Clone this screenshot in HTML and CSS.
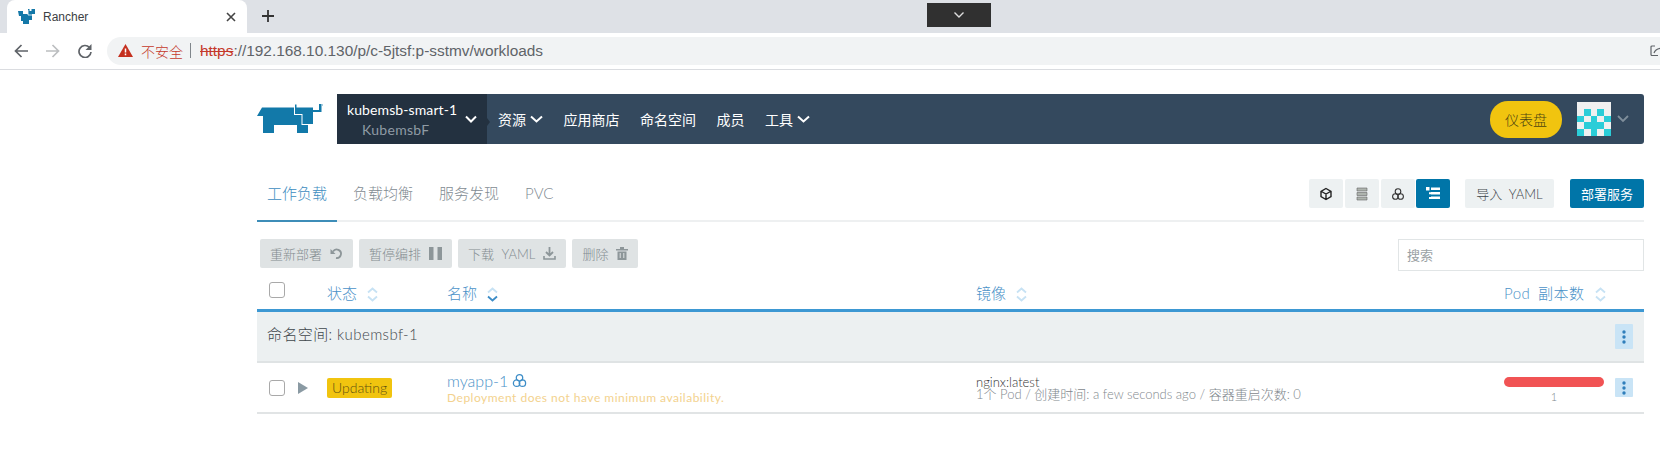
FILE: index.html
```html
<!DOCTYPE html>
<html lang="en">
<head>
    <meta charset="UTF-8">
    <title>Rancher</title>
    <link rel="stylesheet" href="styles.css">
</head>
<body>
    <!-- browser chrome -->
    <div class="tabstrip">
        <div class="tab">
            <svg class="tab-logo" width="17" height="16" viewBox="0 0 17 16"><path fill="#1478a8" d="M0 2h5v3h5V0h1.500v2h2V0H15l2 0v5h-3v6h-3v4H5v-3H3V7H1z"/><path d="M10 1v5h4" fill="none" stroke="#fff" stroke-width=".8"/></svg>
            <span class="tab-title">Rancher</span>
            <svg class="tab-close" width="10" height="10" viewBox="0 0 10 10"><path d="M1 1l8 8M9 1l-8 8" stroke="#444" stroke-width="1.600"/></svg>
        </div>
        <svg class="tab-new" width="12" height="12" viewBox="0 0 12 12"><path d="M6 0v12M0 6h12" stroke="#333" stroke-width="1.800"/></svg>
        <div class="fullscreen-tag">
            <svg width="10" height="6" viewBox="0 0 10 6"><path d="M.5.5L5 5 9.500.5" fill="none" stroke="#ddd" stroke-width="1.400"/></svg>
        </div>
    </div>
    <div class="toolbar">
        <svg class="nav-icon" width="14" height="14" viewBox="0 0 14 14"><path d="M14 7H2M7.500 1L1.500 7l6 6" fill="none" stroke="#5f6368" stroke-width="1.700"/></svg>
        <svg class="nav-icon" width="14" height="14" viewBox="0 0 14 14"><path d="M0 7h12M6.500 1l6 6-6 6" fill="none" stroke="#bcbec0" stroke-width="1.700"/></svg>
        <svg class="nav-icon" width="14" height="14" viewBox="0 0 14 14"><path d="M11.500 3.500A6 6 0 1 0 13 8" fill="none" stroke="#5f6368" stroke-width="1.700"/><path d="M13.500 0v6h-6z" fill="#5f6368"/></svg>
        <div class="omnibox">
            <svg width="15" height="13" viewBox="0 0 15 13"><path d="M7.500 0L15 13H0z" fill="#c5301f"/><path d="M7.500 4.500v4M7.500 9.600v1.600" stroke="#fff" stroke-width="1.500"/></svg>
            <span class="not-secure">不安全</span>
            <span class="omni-sep"></span>
            <span class="url"><span class="url-scheme">https</span>://192.168.10.130/p/c-5jtsf:p-sstmv/workloads</span>
            <svg class="share-icon" width="15" height="13" viewBox="0 0 15 13"><path d="M8 11.500H2a1 1 0 0 1-1-1V3a1 1 0 0 1 1-1h3M4 9c1-3 3-5 10-5" fill="none" stroke="#5f6368" stroke-width="1.200"/></svg>
        </div>
    </div>

    <div class="page">
        <!-- rancher header -->
        <header class="app-header">
            <div class="logo">
                <svg width="66" height="30" viewBox="17 14 66 30">
                    <path fill="#1279a9" d="M17 26l5-8.500h32V25h7.500v10H68v8H57v-8H34v8H23V26z"/>
                    <path fill="#1279a9" d="M55 14.500h1.500v3H73V34H62.500V24H55z"/>
                    <path fill="#1279a9" d="M79 14h2.500v8H73v-2h6z"/>
                    <circle cx="83" cy="15" r="1" fill="#8fbdd4"/>
                </svg>
            </div>
            <nav class="topbar">
                <div class="cluster">
                    <div class="cluster-text">
                        <div class="cluster-name">kubemsb-smart-1</div>
                        <div class="cluster-project">KubemsbF</div>
                    </div>
                    <svg class="chev" width="12" height="8" viewBox="0 0 12 8"><path d="M1 1.500l5 5 5-5" fill="none" stroke="#fff" stroke-width="2"/></svg>
                </div>
                <a class="nav-item">资源 <svg width="13" height="8" viewBox="0 0 13 8"><path d="M1 1.500l5.500 5 5.500-5" fill="none" stroke="#fff" stroke-width="2"/></svg></a>
                <a class="nav-item">应用商店</a>
                <a class="nav-item">命名空间</a>
                <a class="nav-item">成员</a>
                <a class="nav-item">工具 <svg width="13" height="8" viewBox="0 0 13 8"><path d="M1 1.500l5.500 5 5.500-5" fill="none" stroke="#fff" stroke-width="2"/></svg></a>
                <div class="topbar-right">
                    <a class="dashboard-btn">仪表盘</a>
                    <svg class="avatar" width="34" height="34" viewBox="0 0 5 5" shape-rendering="crispEdges">
                        <rect width="5" height="5" fill="#f0f0f0"/>
                        <path fill="#2bcdd8" d="M1 1h1v1H1zM3 1h1v1H3zM0 2h1v1H0zM2 2h1v1H2zM4 2h1v1H4zM1 3h3v1H1zM0 4h1v1H0zM2 4h1v1H2zM4 4h1v1H4z"/>
                    </svg>
                    <svg class="avatar-chev" width="12" height="8" viewBox="0 0 12 8"><path d="M1 1l5 5 5-5" fill="none" stroke="#7f8e9b" stroke-width="1.800"/></svg>
                </div>
            </nav>
        </header>

        <!-- tabs row -->
        <div class="tabs-row">
            <ul class="tabs">
                <li class="tab-link active">工作负载</li>
                <li class="tab-link">负载均衡</li>
                <li class="tab-link">服务发现</li>
                <li class="tab-link">PVC</li>
            </ul>
            <div class="tabs-actions">
                <div class="group-by">
                    <button class="btn-icon"><svg width="14" height="14" viewBox="0 0 14 14"><path d="M7 1.500l5 2.800v5.400l-5 2.800-5-2.800V4.300zM2.500 4.500L7 7l4.500-2.500M7 7v5" fill="none" stroke="#222" stroke-width="1.400"/></svg></button>
                    <button class="btn-icon"><svg width="14" height="14" viewBox="0 0 14 14"><path d="M2 1h10v3H2zM2 5.500h10v3H2zM2 10h10v3H2z" fill="#aeb4ae" stroke="#666" stroke-width=".6"/></svg></button>
                    <button class="btn-icon"><svg width="14" height="14" viewBox="0 0 14 14" fill="none" stroke="#333" stroke-width="1.100"><circle cx="7" cy="4.500" r="2.800"/><circle cx="4.400" cy="9.500" r="2.800"/><circle cx="9.600" cy="9.500" r="2.800"/></svg></button>
                    <button class="btn-icon selected"><svg width="14" height="13" viewBox="0 0 14 13" fill="#fff"><path d="M0 0h3.500v3.500H0zM5 .5h9v2.500H5zM3 5.300h2v2H3zM5 5h9v2.500H5zM3 10h2v2H3zM5 9.500h9V12H5z"/></svg></button>
                </div>
                <button class="btn-import">导入 YAML</button>
                <button class="btn-deploy">部署服务</button>
            </div>
        </div>

        <!-- bulk actions -->
        <div class="bulk-row">
            <div class="bulk-actions">
                <button class="btn-bulk">重新部署 <svg width="13" height="13" viewBox="0 0 13 13"><path d="M3 4.500A4.300 4.300 0 1 1 6 11" fill="none" stroke="#8d9699" stroke-width="1.800"/><path d="M.5 2v5h5z" fill="#8d9699"/></svg></button>
                <button class="btn-bulk">暂停编排 <svg width="13" height="13" viewBox="0 0 13 13"><path d="M0 0h4.500v13H0zM8.500 0H13v13H8.500z" fill="#8d9699"/></svg></button>
                <button class="btn-bulk">下载 YAML <svg width="13" height="13" viewBox="0 0 13 13"><path d="M6.500 0v8M3 5l3.500 3.500L10 5" fill="none" stroke="#8d9699" stroke-width="1.800"/><path d="M1 9v3h11V9" fill="none" stroke="#8d9699" stroke-width="1.600"/></svg></button>
                <button class="btn-bulk">删除 <svg width="12" height="13" viewBox="0 0 12 13"><path d="M0 2h12v1.500H0zM4 0h4v2H4zM1.500 4.500h9V13h-9z" fill="#8d9699"/><path d="M4.200 6v5M7.800 6v5" stroke="#dfe3e4"/></svg></button>
            </div>
            <input class="search" placeholder="搜索">
        </div>

        <!-- table -->
        <div class="table">
            <div class="row head">
                <div class="col-check"><span class="checkbox"></span></div>
                <div class="col-state">状态 <svg class="sort" width="11" height="15" viewBox="0 0 11 15"><path d="M1 5.500l4.500-4 4.500 4M1 9.500l4.500 4 4.500-4" fill="none" stroke="#c7e2f4" stroke-width="1.800"/></svg></div>
                <div class="col-name">名称 <svg class="sort" width="11" height="15" viewBox="0 0 11 15"><path d="M1 5.500l4.500-4 4.500 4" fill="none" stroke="#c7e2f4" stroke-width="1.800"/><path d="M1 9.500l4.500 4 4.500-4" fill="none" stroke="#3d8dc7" stroke-width="1.800"/></svg></div>
                <div class="col-image">镜像 <svg class="sort" width="11" height="15" viewBox="0 0 11 15"><path d="M1 5.500l4.500-4 4.500 4M1 9.500l4.500 4 4.500-4" fill="none" stroke="#c7e2f4" stroke-width="1.800"/></svg></div>
                <div class="col-pods">Pod 副本数 <svg class="sort" width="11" height="15" viewBox="0 0 11 15"><path d="M1 5.500l4.500-4 4.500 4M1 9.500l4.500 4 4.500-4" fill="none" stroke="#c7e2f4" stroke-width="1.800"/></svg></div>
            </div>
            <div class="group-row">
                <span class="group-name">命名空间: kubemsbf-1</span>
                <button class="btn-more tall"><svg width="4" height="14" viewBox="0 0 4 14" fill="#2f7fbb"><circle cx="2" cy="2" r="1.700"/><circle cx="2" cy="7" r="1.700"/><circle cx="2" cy="12" r="1.700"/></svg></button>
            </div>
            <div class="row item">
                <div class="col-check">
                    <span class="checkbox"></span>
                    <svg class="expand" width="10" height="12" viewBox="0 0 10 12"><path d="M0 0l10 6-10 6z" fill="#8a9aa3"/></svg>
                </div>
                <div class="col-state"><span class="badge">Updating</span></div>
                <div class="col-name">
                    <div class="app-name">myapp-1 <svg width="15" height="15" viewBox="0 0 14 14" fill="none" stroke="#3d8dc7" stroke-width="1.200"><circle cx="7" cy="4.500" r="3"/><circle cx="4.300" cy="9.500" r="3"/><circle cx="9.700" cy="9.500" r="3"/></svg></div>
                    <div class="app-warn">Deployment does not have minimum availability.</div>
                </div>
                <div class="col-image">
                    <div class="image-name">nginx:latest</div>
                    <div class="image-meta">1个 Pod / 创建时间: a few seconds ago / 容器重启次数: 0</div>
                </div>
                <div class="col-pods">
                    <div class="pod-bar"></div>
                    <div class="pod-count">1</div>
                </div>
                <button class="btn-more"><svg width="4" height="14" viewBox="0 0 4 14" fill="#2f7fbb"><circle cx="2" cy="2" r="1.700"/><circle cx="2" cy="7" r="1.700"/><circle cx="2" cy="12" r="1.700"/></svg></button>
            </div>
        </div>
    </div>
</body>
</html>
```
FILE: styles.css
```css
* {
    box-sizing: border-box;
}

body {
    margin: 0;
    width: 1660px;
    height: 476px;
    overflow: hidden;
    background-color: #fff;
    font-family: Lato, "Noto Sans CJK SC", sans-serif;
    font-weight: 300;
    color: #333;
}

button {
    font-family: inherit;
    font-weight: inherit;
    border: 0;
}

/* browser chrome */
.tabstrip {
    display: flex;
    align-items: flex-start;
    height: 33px;
    padding-left: 7px;
    background-color: #dee1e6;
}

.tab {
    display: flex;
    align-items: center;
    flex: none;
    width: 240px;
    height: 33px;
    padding-left: 11px;
    background-color: #fff;
    border-radius: 8px 8px 0 0;
}

.tab-title {
    margin-left: 8px;
    font-family: "Liberation Sans", sans-serif;
    font-weight: 400;
    font-size: 12px;
    color: #3c4043;
}

.tab-close {
    margin-left: auto;
    margin-right: 11px;
}

.tab-new {
    flex: none;
    margin: 10px 0 0 15px;
}

.fullscreen-tag {
    display: flex;
    align-items: center;
    justify-content: center;
    flex: none;
    width: 64px;
    height: 24px;
    margin: 3px 0 0 653px;
    background-color: #303030;
}

.toolbar {
    display: flex;
    align-items: center;
    height: 37px;
    padding: 0 0 1px 14px;
    border-bottom: 1px solid #dadce0;
}

.nav-icon {
    margin-right: 18px;
}

.nav-icon + .nav-icon + .nav-icon {
    margin-right: 15px;
}

.omnibox {
    display: flex;
    align-items: center;
    flex: 1;
    height: 28px;
    padding-left: 11px;
    background-color: #f1f3f4;
    border-radius: 14px 0 0 14px;
}

.not-secure {
    margin-left: 8px;
    font-size: 14px;
    color: #c5392b;
}

.omni-sep {
    width: 1px;
    height: 15px;
    margin: 0 9px 0 7px;
    background-color: #80868b;
}

.url {
    font-family: "Liberation Sans", sans-serif;
    font-weight: 400;
    font-size: 15.400px;
    color: #5f6368;
}

.url-scheme {
    color: #c5392b;
    text-decoration: line-through;
}

.share-icon {
    margin-left: auto;
    margin-right: -5px;
}

.page {
    padding-left: 257px;
    padding-right: 16px;
}

/* rancher header */
.app-header {
    display: flex;
    height: 50px;
    margin-top: 24px;
}

.logo {
    display: flex;
    align-items: center;
    width: 80px;
}

.topbar {
    display: flex;
    align-items: center;
    flex: 1;
    background-color: #34495e;
    border-radius: 0 3px 3px 0;
}

.cluster {
    position: relative;
    display: flex;
    align-items: center;
    width: 150px;
    height: 50px;
    padding-left: 10px;
    background-color: #233140;
}

.cluster::after {
    content: "";
    position: absolute;
    left: 100%;
    top: 24px;
    border-left: 3px solid #233140;
    border-top: 4px solid transparent;
    border-bottom: 4px solid transparent;
}

.cluster-text {
    flex: 1;
}

.cluster-name {
    font-size: 14px;
    font-weight: 400;
    letter-spacing: .1px;
    color: #fff;
}

.cluster-project {
    margin: 3px 0 0 15px;
    font-size: 14px;
    font-weight: 400;
    letter-spacing: .3px;
    color: #8f9ba5;
}

.cluster .chev {
    margin-right: 10px;
}

.nav-item {
    display: flex;
    align-items: center;
    gap: 4px;
    margin-left: 11px;
    margin-right: 9.500px;
    font-size: 14px;
    font-weight: 400;
    color: #fff;
}

.topbar-right {
    display: flex;
    align-items: center;
    margin-left: auto;
}

.dashboard-btn {
    display: flex;
    align-items: center;
    justify-content: center;
    width: 72px;
    height: 37px;
    border-radius: 18px;
    background-color: #f1c40f;
    font-size: 14px;
    color: #4d4410;
}

.avatar {
    margin-left: 15px;
}

.avatar-chev {
    margin: 0 15px 0 6px;
}

/* tabs row */
.tabs-row {
    display: flex;
    justify-content: space-between;
    height: 78px;
    border-bottom: 2px solid #eef0f1;
}

.tabs {
    display: flex;
    gap: 26px;
    margin: 0;
    padding: 0;
    list-style: none;
}

.tab-link {
    padding-top: 39px;
    line-height: 20px;
    font-size: 15px;
    color: #7f8b92;
}

.tab-link.active {
    margin: 0 -10px -2px 0;
    padding-left: 10px;
    padding-right: 10px;
    border-bottom: 2px solid #3d8db8;
    color: #3d8dc0;
}

.tabs-actions {
    display: flex;
    align-items: flex-start;
    padding-top: 35px;
}

.group-by {
    display: flex;
    gap: 2px;
    margin-right: 15px;
}

.btn-icon {
    display: flex;
    align-items: center;
    justify-content: center;
    width: 34px;
    height: 29px;
    padding: 0;
    background-color: #edf1f2;
    border-radius: 2px;
}

.btn-icon.selected {
    margin-left: -1px;
    background-color: #0075a8;
}

.btn-import {
    width: 89px;
    height: 29px;
    margin-right: 16px;
    padding: 0;
    background-color: #edf1f2;
    border-radius: 2px;
    font-size: 13px;
    word-spacing: 3px;
    color: #3f474c;
}

.btn-deploy {
    width: 74px;
    height: 29px;
    padding: 0;
    background-color: #0075a8;
    border-radius: 2px;
    font-size: 13px;
    font-weight: 400;
    color: #fff;
}

/* bulk actions */
.bulk-row {
    display: flex;
    justify-content: space-between;
    align-items: flex-start;
    margin-top: 17px;
    padding-left: 3px;
}

.bulk-actions {
    display: flex;
    gap: 6px;
}

.btn-bulk {
    display: flex;
    align-items: center;
    justify-content: center;
    gap: 8px;
    height: 29px;
    padding: 0 10px;
    background-color: #dfe3e4;
    border-radius: 2px;
    font-size: 13px;
    word-spacing: 4px;
    color: #838c90;
}

.search {
    width: 246px;
    height: 32px;
    padding: 0 8px;
    border: 1px solid #e1e5e6;
    font-size: 13px;
    font-family: inherit;
    outline: none;
}

.search::placeholder {
    color: #9aa1a4;
}

/* table */
.row {
    display: flex;
    align-items: center;
}

.row.head {
    height: 41px;
    padding-top: 4px;
    border-bottom: 3px solid #3d98d3;
    font-size: 15px;
    word-spacing: 3px;
    color: #4b92c8;
}

.head .col-check {
    padding-bottom: 5px;
}

.head .col-pods {
    letter-spacing: .5px;
}

.col-check {
    display: flex;
    align-items: center;
    gap: 13px;
    width: 70px;
    padding-left: 12px;
}

.col-state {
    width: 120px;
}

.col-name {
    width: 529px;
}

.col-image {
    width: 528px;
}

.col-pods {
    width: 111px;
    flex: none;
}

.sort {
    margin-left: 3px;
    vertical-align: -3px;
}

.checkbox {
    display: inline-block;
    flex: none;
    width: 16px;
    height: 16px;
    background-color: #fff;
    border: 1px solid #a9a9a9;
    border-radius: 3px;
}

.group-row {
    display: flex;
    align-items: center;
    justify-content: space-between;
    height: 51px;
    padding: 0 11px 0 10px;
    background-color: #ecf0f1;
    border-bottom: 2px solid #dfe3e4;
    font-size: 15px;
    color: #3f474c;
}

.group-name {
    padding-bottom: 6px;
    letter-spacing: .4px;
}

.btn-more {
    display: flex;
    align-items: center;
    justify-content: center;
    flex: none;
    width: 18px;
    height: 19px;
    padding: 0;
    background-color: #c9e4f6;
    border-radius: 1px;
}

.btn-more.tall {
    height: 25px;
}

.row.item {
    height: 51px;
    border-bottom: 2px solid #e1e4e5;
}

.item .col-name {
    padding-top: 2px;
}

.badge {
    display: inline-block;
    padding: 1px 5px;
    line-height: 18px;
    border-radius: 2px;
    background-color: #f1c40f;
    font-size: 14px;
    color: #5f5210;
}

.app-name {
    display: flex;
    align-items: center;
    gap: 4px;
    font-size: 16px;
    line-height: 17px;
    color: #4b92c8;
}

.app-warn {
    font-size: 12px;
    font-weight: 400;
    line-height: 17px;
    letter-spacing: .5px;
    color: #f3d28e;
}

.image-name {
    font-size: 13px;
    line-height: 12px;
    color: #333;
}

.image-meta {
    font-size: 13px;
    line-height: 12px;
    color: #7f888d;
}

.item .col-pods {
    padding-top: 6px;
}

.pod-bar {
    width: 100px;
    height: 10px;
    border-radius: 5px;
    background-color: #f15354;
}

.pod-count {
    width: 100px;
    margin-top: 3px;
    line-height: 14px;
    text-align: center;
    font-size: 11px;
    color: #7f888d;
}
```
